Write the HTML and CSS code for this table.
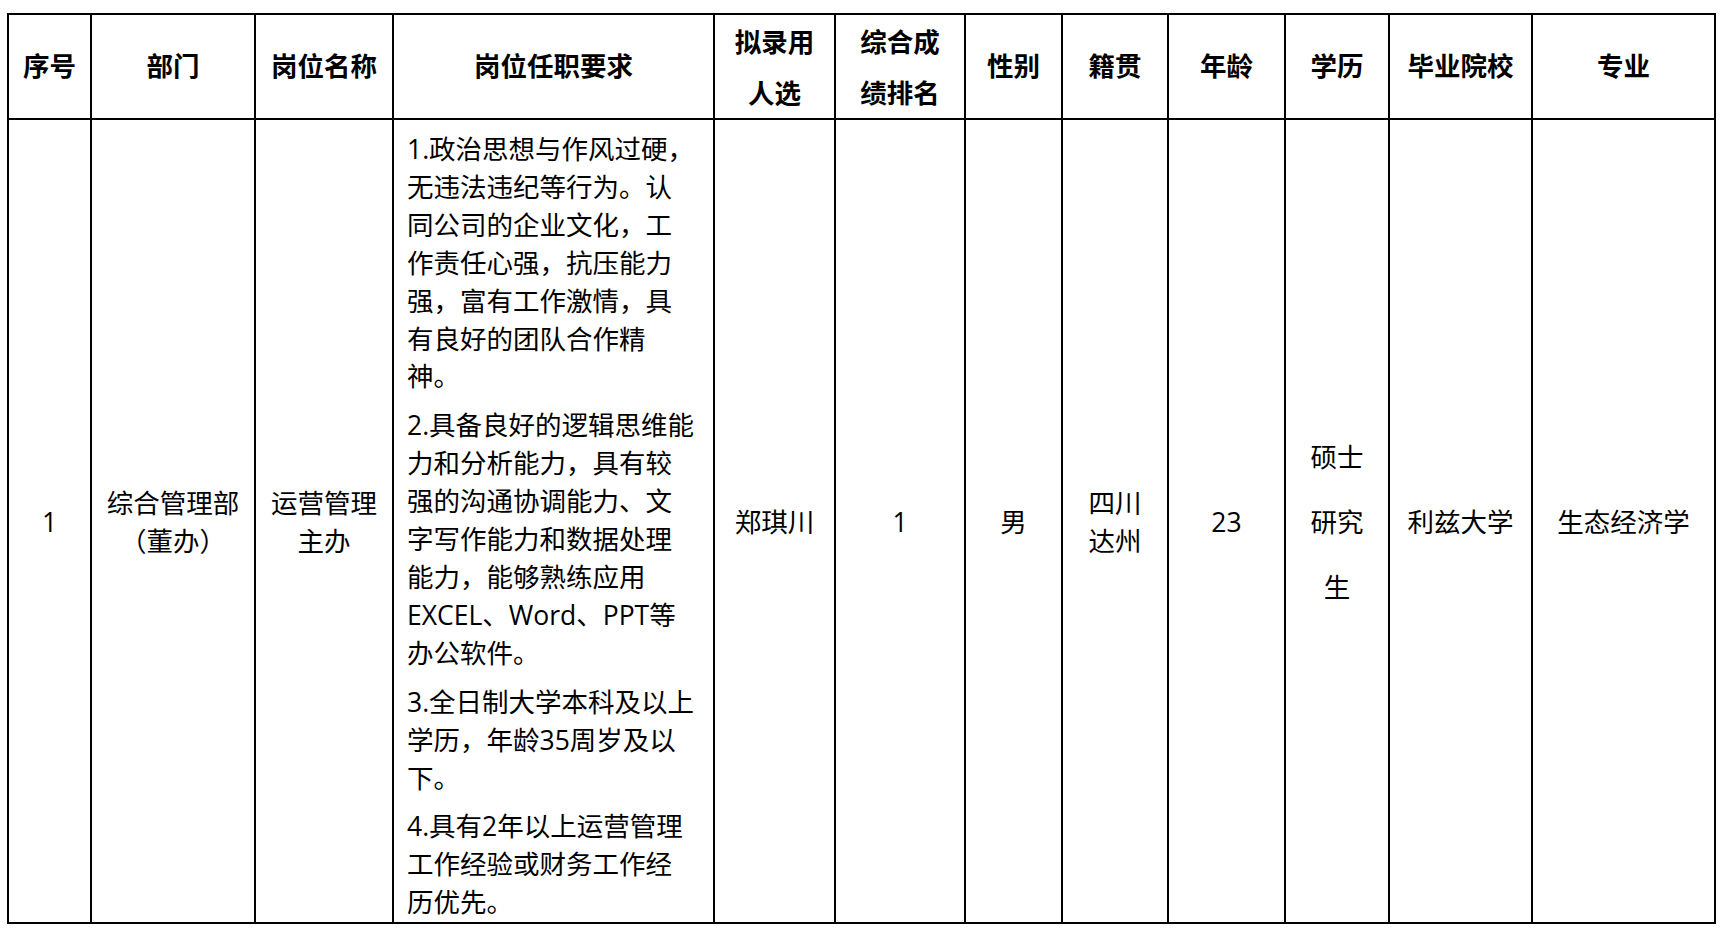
FILE: index.html
```html
<!DOCTYPE html>
<html lang="zh-CN">
<head>
<meta charset="utf-8">
<title>拟录用人员公示</title>
<link rel="stylesheet" href="styles.css">
</head>
<body>
<table class="sheet">
  <colgroup>
    <col class="c-no">
    <col class="c-dept">
    <col class="c-post">
    <col class="c-req">
    <col class="c-name">
    <col class="c-rank">
    <col class="c-sex">
    <col class="c-origin">
    <col class="c-age">
    <col class="c-edu">
    <col class="c-school">
    <col class="c-major">
  </colgroup>
  <thead>
    <tr class="head-row">
      <th>序号</th>
      <th>部门</th>
      <th>岗位名称</th>
      <th>岗位任职要求</th>
      <th class="two">拟录用<br>人选</th>
      <th class="two">综合成<br>绩排名</th>
      <th>性别</th>
      <th>籍贯</th>
      <th>年龄</th>
      <th>学历</th>
      <th>毕业院校</th>
      <th>专业</th>
    </tr>
  </thead>
  <tbody>
    <tr class="body-row">
      <td>1</td>
      <td>综合管理部<br>（董办）</td>
      <td>运营管理<br>主办</td>
      <td class="req">
        <p>1.政治思想与作风过硬，<br>无违法违纪等行为。认<br>同公司的企业文化，工<br>作责任心强，抗压能力<br>强，富有工作激情，具<br>有良好的团队合作精<br>神。</p>
        <p>2.具备良好的逻辑思维能<br>力和分析能力，具有较<br>强的沟通协调能力、文<br>字写作能力和数据处理<br>能力，能够熟练应用<br>EXCEL、Word、PPT等<br>办公软件。</p>
        <p>3.全日制大学本科及以上<br>学历，年龄35周岁及以<br>下。</p>
        <p>4.具有2年以上运营管理<br>工作经验或财务工作经<br>历优先。</p>
      </td>
      <td>郑琪川</td>
      <td>1</td>
      <td>男</td>
      <td>四川<br>达州</td>
      <td>23</td>
      <td class="edu">硕士<br>研究<br>生</td>
      <td>利兹大学</td>
      <td>生态经济学</td>
    </tr>
  </tbody>
</table>
</body>
</html>
```

FILE: styles.css
```css
html, body {
  margin: 0;
  padding: 0;
  background: #ffffff;
}

body {
  font-family: "Open Sans", "Noto Sans CJK SC", sans-serif;
  color: #000000;
}

.sheet {
  margin: 13px 0 0 7px;
  border-collapse: collapse;
  table-layout: fixed;
  width: 1707px;
  font-size: 26.5px;
}

.c-no { width: 83px; }
.c-dept { width: 164px; }
.c-post { width: 138px; }
.c-req { width: 321px; }
.c-name { width: 121px; }
.c-rank { width: 130px; }
.c-sex { width: 97px; }
.c-origin { width: 106px; }
.c-age { width: 117px; }
.c-edu { width: 104px; }
.c-school { width: 143px; }
.c-major { width: 183px; }

.sheet th,
.sheet td {
  border: 2px solid #000000;
  padding: 3px 4px 0 4px;
  text-align: center;
  vertical-align: middle;
  line-height: 37.5px;
  white-space: nowrap;
}

.sheet th {
  font-family: "Noto Sans CJK SC", sans-serif;
  font-weight: 700;
  padding: 0 4px 3px 4px;
}

.head-row th {
  height: 105px;
  box-sizing: border-box;
}

.sheet th.two {
  line-height: 51px;
  padding-bottom: 1px;
}

.body-row td {
  height: 803px;
  box-sizing: border-box;
}

.sheet td.req {
  text-align: left;
  vertical-align: top;
  padding: 11px 4px 0 13px;
}

.req p {
  margin: 0 0 11px 0;
  line-height: 37.9px;
}

.req p:last-child {
  margin-bottom: 0;
}

.sheet td.edu {
  line-height: 65px;
}
```
